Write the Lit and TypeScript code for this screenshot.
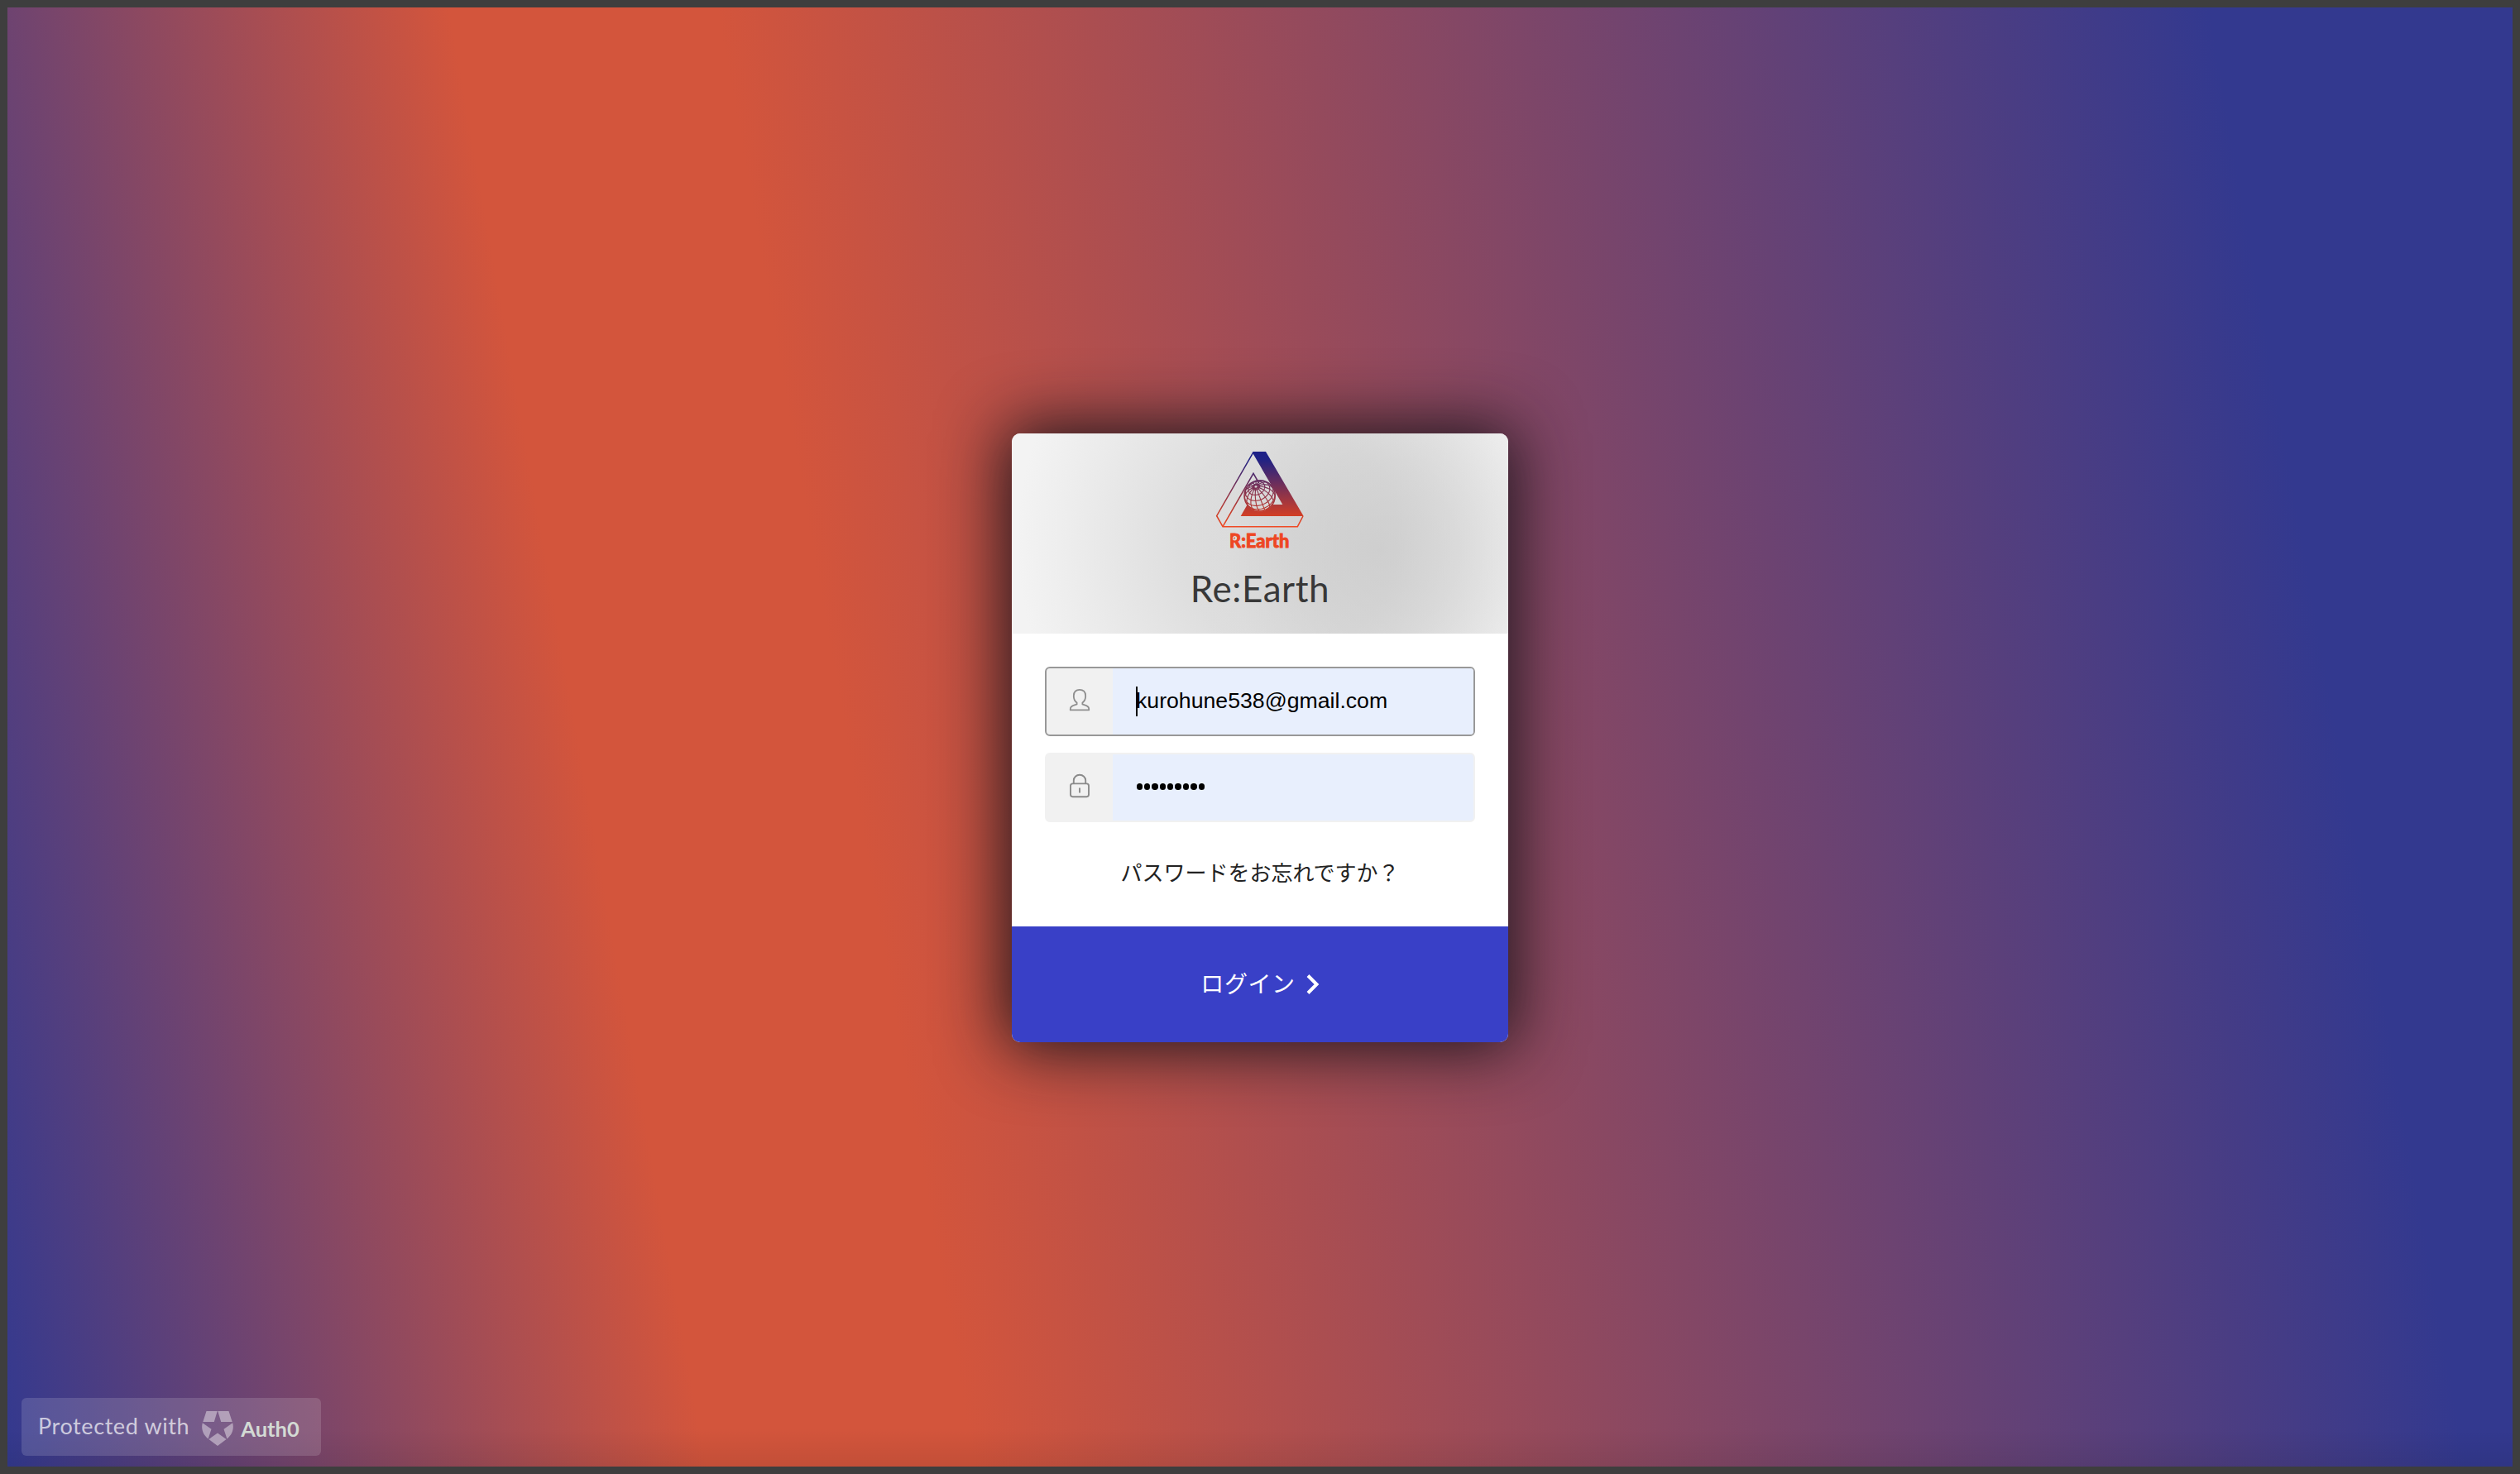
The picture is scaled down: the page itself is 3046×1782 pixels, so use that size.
import { LitElement, html, svg, css } from "lit";
import { customElement } from "lit/decorators.js";

type Vec = [number, number, number];

const CX = 249;
const CY = 238;
const R = 55;

/* Orthographic globe wireframe with its pole tipped toward the viewer. */
function globePath(): string {
  const pole: Vec = [-0.25, 0.6, 0.76];
  const pl = Math.hypot(...pole);
  const p = pole.map((v) => v / pl) as Vec;
  const ul = Math.hypot(p[2], p[0]);
  const u: Vec = [p[2] / ul, 0, -p[0] / ul];
  const w: Vec = [
    p[1] * u[2] - p[2] * u[1],
    p[2] * u[0] - p[0] * u[2],
    p[0] * u[1] - p[1] * u[0],
  ];
  let d = "";
  const trace = (pts: [number, number][]) => {
    let pen = false;
    for (const [lat, lon] of pts) {
      const a = (lat * Math.PI) / 180;
      const b = (lon * Math.PI) / 180;
      const q = [0, 1, 2].map(
        (i) => Math.sin(a) * p[i] + Math.cos(a) * (Math.cos(b) * u[i] + Math.sin(b) * w[i]),
      );
      if (q[2] < 0) {
        pen = false;
        continue;
      }
      d += `${pen ? "L" : "M"}${(CX + R * q[0]).toFixed(1)} ${(CY - R * q[1]).toFixed(1)}`;
      pen = true;
    }
  };
  for (const lat of [76, 56, 34, 12, -10, -32]) {
    trace(Array.from({ length: 73 }, (_, i) => [lat, i * 5] as [number, number]));
  }
  for (let lon = 0; lon < 360; lon += 24) {
    trace(Array.from({ length: 36 }, (_, i) => [85 - i * 5, lon + 8] as [number, number]));
  }
  return d;
}

const GLOBE = globePath();

@customElement("brand-logo")
export class BrandLogo extends LitElement {
  static styles = css`
    :host { display: block; }
    svg { display: block; width: 108px; height: 126px; overflow: visible; }
    .word { font-family: Lato, sans-serif; font-weight: 900; font-size: 66px; fill: #ee4623; stroke: #ee4623; stroke-width: 2.5; }
  `;
  render() {
    return html`<svg viewBox="88 75 324 378" fill="none">
      <defs>
        <linearGradient id="g" gradientUnits="userSpaceOnUse" x1="0" y1="78" x2="0" y2="350">
          <stop offset="0" stop-color="#1c2088" />
          <stop offset="0.1" stop-color="#1f2285" />
          <stop offset="0.85" stop-color="#d03e26" />
          <stop offset="1" stop-color="#f04a25" />
        </linearGradient>
        <mask id="m" maskUnits="userSpaceOnUse" x="80" y="70" width="340" height="300">
          <rect x="80" y="70" width="340" height="300" fill="#fff" />
          <circle cx=${CX} cy=${CY} r="57" fill="#000" />
        </mask>
      </defs>
      <path mask="url(#m)" fill="url(#g)" d="M224 78H271L408 312H180L214 253L240 270H332L224 84Z" />
      <g stroke="url(#g)" stroke-width="4.6">
        <path d="M226 80L93 311L115 350H386L406 312" />
        <path d="M115 350L226 157L246 192" />
        <circle cx=${CX} cy=${CY} r="56" stroke-width="4.4" />
        <path d=${GLOBE} stroke-width="3.4" />
      </g>
      <text class="word" x="139" y="425" textLength="217" lengthAdjust="spacingAndGlyphs">R:Earth</text>
      <circle cx="158" cy="393" r="7.5" fill="#dcdcdc" />
      <path d="M158 388V394H153" stroke="#ee4623" stroke-width="2.5" />
    </svg>`;
  }
}

const userIcon = svg`<svg class="icon" viewBox="0 0 26 28" fill="none" stroke="#8e8e8e" stroke-width="1.8" stroke-linejoin="round">
  <path d="M13 1.8C8.7 1.8 5.8 4.4 5.8 9.2C5.8 12.7 7 15.6 9.6 17.4V19.4C8 20.4 1.8 20.2 1.8 25V26.4H24.2V25C24.2 20.2 18 20.4 16.4 19.4V17.4C19 15.6 20.2 12.7 20.2 9.2C20.2 4.4 17.3 1.8 13 1.8Z"/>
</svg>`;

const lockIcon = svg`<svg class="icon" viewBox="0 0 26 30" fill="none" stroke="#8a8a8a" stroke-width="1.9">
  <rect x="2" y="12.4" width="22" height="15.8" rx="2.6"/>
  <path d="M5.8 12.4V8.6C5.8 4.6 9 1.8 13 1.8S20.2 4.6 20.2 8.6V12.4M13 17.4V23.4"/>
</svg>`;

@customElement("login-field")
export class LoginField extends LitElement {
  static properties = {
    kind: { type: String },
    value: { type: String },
    active: { type: Boolean },
  };
  declare kind: string;
  declare value: string;
  declare active: boolean;
  static styles = css`
    :host { display: block; }
    .field { display: flex; box-sizing: border-box; height: 84px; border: 2px solid #f1f1f1; border-radius: 6px; overflow: hidden; background: #f1f1f1; }
    .active { border-color: #989898; }
    .side { width: 80px; display: flex; align-items: center; justify-content: center; }
    .icon { width: 26px; display: block; margin-bottom: 4px; }
    .input { flex: 1; display: flex; align-items: center; padding-left: 28px; background: #e8effd; color: #000; font: 26.667px "Liberation Sans", Arial, sans-serif; position: relative; }
    .caret { position: absolute; left: 28px; top: 22px; width: 2px; height: 36px; background: #000; }
    .text { line-height: 30px; margin-top: -3px; }
    .dots { display: flex; gap: 2.1px; padding-left: .5px; margin-top: -2px; }
    .dot { width: 7.3px; height: 7.3px; border-radius: 50%; background: #000; }
  `;
  render() {
    const secret = this.kind === "password";
    return html`<div class="field ${this.active ? "active" : ""}">
      <div class="side">${secret ? lockIcon : userIcon}</div>
      <div class="input">
        ${this.active ? html`<span class="caret"></span>` : ""}
        ${secret
          ? html`<span class="dots">${Array.from({ length: 9 }, () => html`<span class="dot"></span>`)}</span>`
          : html`<span class="text">${this.value}</span>`}
      </div>
    </div>`;
  }
}

@customElement("app-root")
export class AppRoot extends LitElement {
  static styles = css`
    :host { display: block; }
    .frame { box-sizing: border-box; width: 3046px; height: 1782px; padding: 9px; background: #3e3e3e; }
    .page {
      position: relative; width: 100%; height: 100%; display: flex; align-items: center; justify-content: center; overflow: hidden;
      background:
        linear-gradient(0deg, rgba(0,0,0,.08), rgba(0,0,0,0) 46px),
        linear-gradient(80deg, #33398f 0%, #d3553c 25.3%, #d3553c 35%, #33398f 89%);
    }
    .card { width: 600px; height: 736px; margin-top: 2px; display: flex; flex-direction: column; border-radius: 10px; overflow: hidden; background: #fff; box-shadow: 0 0 80px 8px rgba(17, 17, 24, .93); }
    .head {
      height: 242px; display: flex; flex-direction: column; align-items: center;
      background:
        radial-gradient(ellipse 230px 260px at 445px 140px, rgba(192,192,192,.5), rgba(198,198,198,.38) 40%, rgba(215,215,215,.12) 80%, rgba(220,220,220,0)),
        radial-gradient(ellipse 330px 340px at 335px 130px, #dadada, #dedede 40%, #ebebeb 75%, #f3f3f3);
    }
    .logo { margin-top: 21px; }
    .title { margin-top: 10px; font: 400 44px/60px Lato, sans-serif; letter-spacing: .6px; color: #383838; }
    .form { height: 354px; box-sizing: border-box; padding: 40px 40px 0; display: flex; flex-direction: column; gap: 20px; }
    .forgot { margin-top: 20px; text-align: center; font: 26px/40px "Noto Sans CJK JP", sans-serif; color: #222; }
    .submit { height: 140px; box-sizing: border-box; padding-bottom: 3px; display: flex; align-items: center; justify-content: center; gap: 13px; background: #3940c7; color: #fff; font: 28px/40px "Noto Sans CJK JP", sans-serif; letter-spacing: .6px; }
    .login { margin-top: -2px; }
    .chevron { width: 16px; height: 26px; margin-top: 2px; }
    .badge { position: absolute; left: 17px; bottom: 13px; box-sizing: border-box; width: 362px; height: 70px; padding-left: 20px; display: flex; align-items: center; border-radius: 6px; background: rgba(255,255,255,.14); color: rgba(255,255,255,.7); font: 27px/40px Lato, sans-serif; }
    .label { letter-spacing: .6px; margin-top: -2px; }
    .shield { width: 38px; height: 42px; margin-left: 15px; margin-top: 4px; fill: rgba(255,255,255,.42); }
    .auth { margin-left: 9px; margin-top: 3px; font: 700 25.5px/40px Lato, sans-serif; color: #d3dad4; }
  `;
  render() {
    return html`<div class="frame"><main class="page">
      <section class="card">
        <header class="head">
          <brand-logo class="logo"></brand-logo>
          <div class="title">Re:Earth</div>
        </header>
        <div class="form">
          <login-field kind="email" value="kurohune538@gmail.com" active></login-field>
          <login-field kind="password"></login-field>
          <div class="forgot">パスワードをお忘れですか？</div>
        </div>
        <div class="submit">
          <span class="login">ログイン</span>
          <svg class="chevron" viewBox="0 0 16 26" fill="none" stroke="#fff" stroke-width="4"><path d="M2 2.5L12.5 13L2 23.5"/></svg>
        </div>
      </section>
      <div class="badge">
        <span class="label">Protected with</span>
        <svg class="shield" viewBox="0 0 38 42">
          <path d="M5.5 0H18.7L14.8 13H1.3ZM19.3 0H32.5L36.7 13H23.2ZM.8 14.2L11.5 21.7L7.6 33.4C1.6 28.6-1.2 21.8.8 14.2ZM37.2 14.2L26.5 21.7L30.4 33.4C36.4 28.6 39.2 21.8 37.2 14.2ZM19 26.5L29.6 34L19 42L8.4 34Z"/>
        </svg>
        <span class="auth">Auth0</span>
      </div>
    </main></div>`;
  }
}
